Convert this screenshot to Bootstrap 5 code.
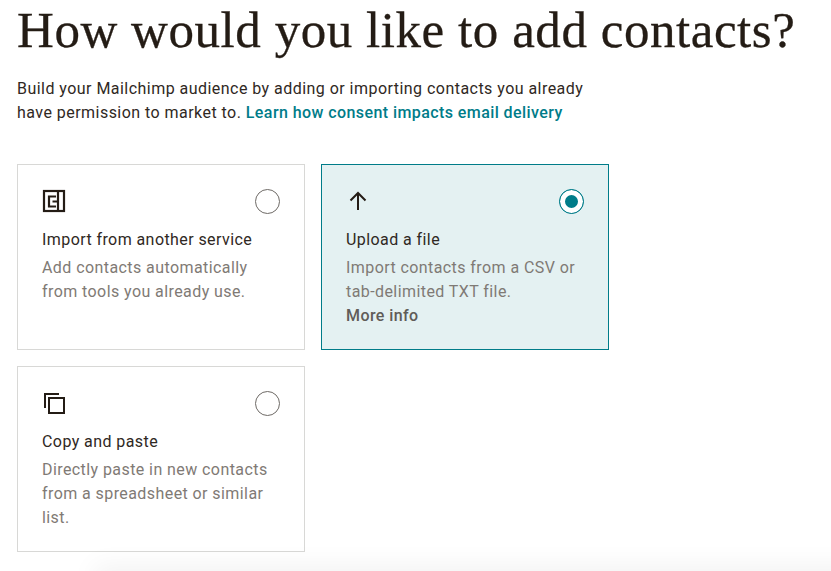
<!DOCTYPE html>
<html lang="en">
<head>
<meta charset="utf-8">
<title>Add contacts</title>
<link href="https://cdn.jsdelivr.net/npm/bootstrap@5.3.0/dist/css/bootstrap.min.css" rel="stylesheet">
<style>
html,body{height:571px;overflow:hidden}
body{background:#fff;font-family:Roboto,sans-serif;color:#241c15;position:relative;letter-spacing:.42px}
.page-wrap{padding:0 17px}
.main-title{font-family:"Liberation Serif",serif;font-size:51px;line-height:60px;font-weight:400;margin:0;letter-spacing:.55px;color:#241c15;white-space:nowrap;-webkit-text-stroke:.3px #241c15}
.intro-text{font-size:16px;line-height:24px;width:600px;margin:17px 0 0;color:#2f2823;letter-spacing:.46px}
.intro-text a{color:#007c89;font-weight:500;text-decoration:none;letter-spacing:.42px}
.choice-grid{display:grid;grid-template-columns:288px 288px;grid-auto-rows:186px;gap:16px;margin-top:39px}
.choice-tile{border:1px solid #d8d8d6;padding:23px 24px 24px;background:#fff}
.choice-tile.is-picked{background:#e4f1f2;border-color:#007c89}
.tile-top{height:26px;margin-bottom:14px}
.tile-top svg{display:block}
.radio-dot{width:25px;height:25px;border-radius:50%;border:1px solid #6e6a66;background:#fff;display:block;flex:none}
.is-picked .radio-dot{border-color:#007c89;box-shadow:inset 0 0 0 5px #fff;background:#007c89}
.tile-name{font-size:16px;line-height:24px;margin:0 0 4px;color:#2f2823}
.tile-desc{font-size:16px;line-height:24px;margin:0;color:#7f7a75}
.tile-desc strong{font-weight:500;color:#605c58;display:block}
.bottom-fade{position:absolute;left:100px;right:-40px;bottom:-24px;height:24px;box-shadow:0 0 26px 6px rgba(0,0,0,.05)}
</style>
</head>
<body>
<div class="page-wrap">
<h1 class="main-title">How would you like to add contacts?</h1>
<p class="intro-text">Build your Mailchimp audience by adding or importing contacts you already have permission to market to. <a href="#">Learn how consent impacts email delivery</a></p>
<div class="choice-grid">
<div class="choice-tile">
<div class="tile-top d-flex justify-content-between align-items-center">
<svg width="24" height="24" viewBox="0 0 24 24" fill="none" stroke="#241c15" stroke-width="2.200"><rect x="2" y="2" width="20" height="20"/><path d="M14 7.500H7v10h7M16 2v20M10.500 12.500H16"/></svg>
<span class="radio-dot"></span>
</div>
<p class="tile-name">Import from another service</p>
<p class="tile-desc">Add contacts automatically from tools you already use.</p>
</div>
<div class="choice-tile is-picked">
<div class="tile-top d-flex justify-content-between align-items-center">
<svg width="24" height="24" viewBox="0 0 24 24" fill="none" stroke="#241c15" stroke-width="2"><path d="M12 21V4M4.500 11.500 12 4l7.500 7.500"/></svg>
<span class="radio-dot"></span>
</div>
<p class="tile-name">Upload a file</p>
<p class="tile-desc">Import contacts from a CSV or tab-delimited TXT file.<strong>More info</strong></p>
</div>
<div class="choice-tile">
<div class="tile-top d-flex justify-content-between align-items-center">
<svg width="24" height="24" viewBox="0 0 24 24" fill="none" stroke="#241c15" stroke-width="2"><rect x="7" y="7" width="15" height="15"/><path d="M3 17V3h14"/></svg>
<span class="radio-dot"></span>
</div>
<p class="tile-name">Copy and paste</p>
<p class="tile-desc">Directly paste in new contacts from a spreadsheet or similar list.</p>
</div>
</div>
</div>
<div class="bottom-fade"></div>
<script src="https://cdn.jsdelivr.net/npm/bootstrap@5.3.0/dist/js/bootstrap.bundle.min.js"></script>
</body>
</html>
